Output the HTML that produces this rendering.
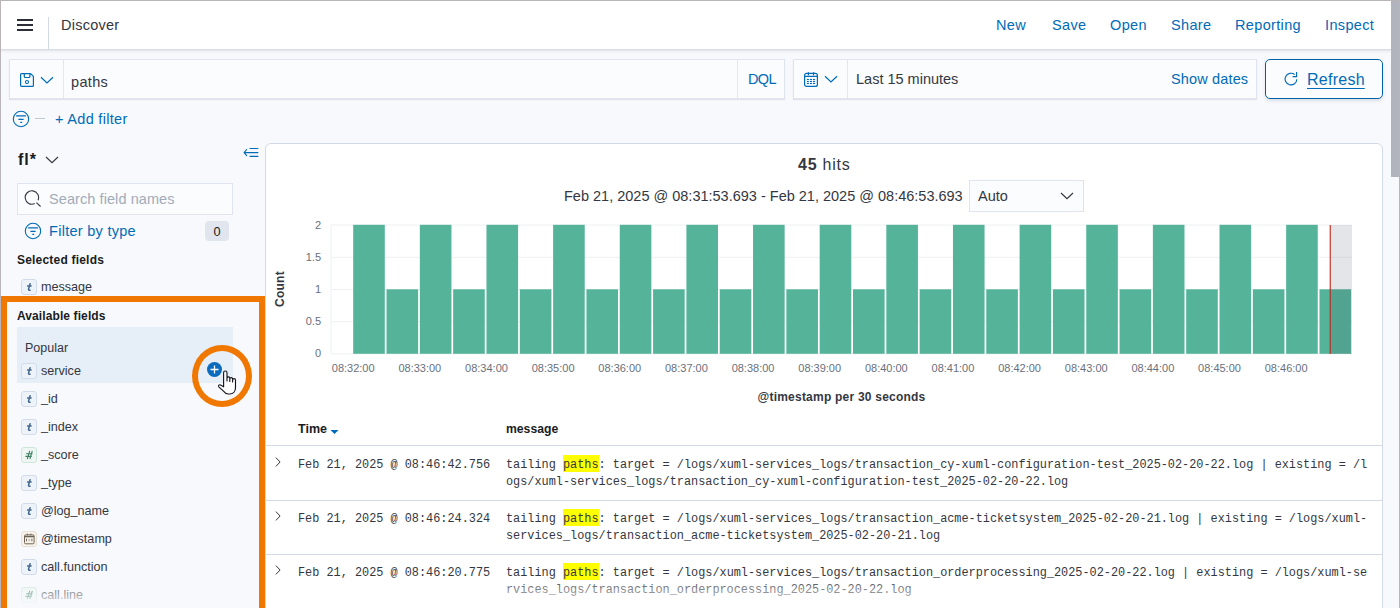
<!DOCTYPE html>
<html><head><meta charset="utf-8">
<style>
*{box-sizing:border-box;margin:0;padding:0}
html,body{width:1400px;height:608px;overflow:hidden}
body{position:relative;background:#F8F9FC;font-family:"Liberation Sans",sans-serif;color:#343741;font-size:14px}
.a{position:absolute;white-space:nowrap;line-height:normal}
.link{color:#006BB8}
.t14{font-size:14.5px;letter-spacing:.25px}
.nav{top:17px;font-size:14.5px;color:#006BB8;letter-spacing:.35px}
.tok{position:absolute;width:16px;height:16px;border:1px solid #d0dcea;border-radius:3px;background:#eef3f9;font:italic bold 11px "Liberation Sans",sans-serif;color:#4d6e93;text-align:center;line-height:14px;z-index:3}
.tnum{background:#eef7f3;border-color:#cde6da;color:#3d7a60;font-size:10px;font-style:italic}
.fld{position:absolute;left:41px;font-size:12.6px;color:#343741;z-index:3;white-space:nowrap}
.mono{font-family:"Liberation Mono",monospace;font-size:11.875px;color:#343741}
.hl{background:#ffff00;padding-top:3px}
.bold12{font-size:12px;font-weight:bold;color:#1a1c21;letter-spacing:.18px}
</style></head>
<body>
<div class="a" style="left:0;top:0;width:1400px;height:608px;border:1px solid #b8b4b8;border-bottom:none;z-index:50"></div>
<div class="a" style="left:1391px;top:1px;width:8px;height:176px;background:#b1b4bd;z-index:49"></div>

<div class="a" style="left:0;top:0;width:1400px;height:49px;background:#fff;box-shadow:0 1px 2px rgba(152,162,179,.35),0 2px 4px rgba(152,162,179,.15);z-index:5">
  <div class="a" style="left:17px;top:19px;width:16px;height:2px;background:#2b2e38"></div>
  <div class="a" style="left:17px;top:24px;width:16px;height:2px;background:#2b2e38"></div>
  <div class="a" style="left:17px;top:29px;width:16px;height:2px;background:#2b2e38"></div>
  <div class="a" style="left:48px;top:17px;width:1px;height:32px;background:#d3dae6"></div>
  <div class="a" style="left:61px;top:17px;font-size:14.5px;color:#343741;letter-spacing:.25px">Discover</div>
  <div class="a nav" style="left:996px">New</div>
  <div class="a nav" style="left:1052px">Save</div>
  <div class="a nav" style="left:1110px">Open</div>
  <div class="a nav" style="left:1171px">Share</div>
  <div class="a nav" style="left:1235px">Reporting</div>
  <div class="a nav" style="left:1325px">Inspect</div>
</div>


<div class="a" style="left:9px;top:59px;width:776px;height:40px;background:#FBFCFD;border:1px solid #dfe4ee;box-shadow:0 1px 1px rgba(152,162,179,.25)"></div>
<div class="a" style="left:63px;top:60px;width:1px;height:38px;background:#e3e8f0"></div>
<svg class="a" style="left:20px;top:73px" width="14" height="14" viewBox="0 0 14 14"><path d="M1.6 0.6H10.6L13.4 3.4V12.4A1 1 0 0 1 12.4 13.4H1.6A1 1 0 0 1 0.6 12.4V1.6A1 1 0 0 1 1.6 0.6Z M4.3 0.6V3.5A1 1 0 0 0 5.3 4.5H8.9A1 1 0 0 0 9.9 3.5V0.6" fill="none" stroke="#006BB8" stroke-width="1.2" stroke-linejoin="round"/><circle cx="7" cy="9" r="1.55" fill="none" stroke="#006BB8" stroke-width="1.05"/></svg>
<svg class="a" style="left:40px;top:76px" width="14" height="8" viewBox="0 0 14 8"><path d="M1 1.3l6 5.6 6-5.6" fill="none" stroke="#006BB8" stroke-width="1.2"/></svg>
<div class="a t14" style="left:71px;top:73.5px;color:#343741;letter-spacing:.35px">paths</div>
<div class="a" style="left:737px;top:60px;width:1px;height:38px;background:#e3e8f0"></div>
<div class="a link" style="left:748px;top:71px;font-size:14.5px;letter-spacing:-.6px">DQL</div>

<div class="a" style="left:793px;top:59px;width:464px;height:40px;background:#FBFCFD;border:1px solid #dfe4ee;box-shadow:0 1px 1px rgba(152,162,179,.25)"></div>
<div class="a" style="left:847px;top:60px;width:1px;height:38px;background:#e3e8f0"></div>
<svg class="a" style="left:804px;top:72px" width="14" height="16" viewBox="0 0 14 16"><rect x="0.6" y="1.4" width="12.8" height="13" rx="2" fill="none" stroke="#006BB8" stroke-width="1.2"/><path d="M0.6 4.3h12.8M4.4 0.2v3M9.5 0.2v3" fill="none" stroke="#006BB8" stroke-width="1.2"/><g fill="#006BB8"><rect x="2.9" y="6.95" width="2" height="1.1"/><rect x="6.0" y="6.95" width="2" height="1.1"/><rect x="9.0" y="6.95" width="2" height="1.1"/><rect x="2.9" y="8.95" width="2" height="1.1"/><rect x="6.0" y="8.95" width="2" height="1.1"/><rect x="9.0" y="8.95" width="2" height="1.1"/><rect x="2.9" y="10.95" width="2" height="1.1"/><rect x="6.0" y="10.95" width="2" height="1.1"/><rect x="9.0" y="10.95" width="2" height="1.1"/></g></svg>
<svg class="a" style="left:824px;top:75.3px" width="14" height="8" viewBox="0 0 14 8"><path d="M1 1.3l6 5.6 6-5.6" fill="none" stroke="#006BB8" stroke-width="1.2"/></svg>
<div class="a" style="left:856px;top:71px;font-size:14.5px;color:#343741">Last 15 minutes</div>
<div class="a link" style="left:1171px;top:71px;font-size:14.5px;letter-spacing:.15px">Show dates</div>

<div class="a" style="left:1265px;top:59px;width:118px;height:40px;background:#FBFCFD;border:1px solid #0061a6;border-radius:5px;box-shadow:0 2px 3px rgba(152,162,179,.3)"></div>
<svg class="a" style="left:1284px;top:71px" width="16" height="16" viewBox="0 0 16 16"><path d="M12.8 8.2A5.85 5.85 0 1 1 10.6 3.5M12.6 1V5.6H8.6" fill="none" stroke="#006BB8" stroke-width="1.15"/></svg>
<div class="a link" style="left:1307px;top:71px;font-size:16px;letter-spacing:.25px;text-decoration:underline;text-underline-offset:2.5px">Refresh</div>

<svg class="a" style="left:12px;top:110px" width="18" height="18" viewBox="0 0 18 18"><circle cx="9" cy="9" r="7.7" fill="none" stroke="#006BB8" stroke-width="1.1"/><path d="M4.1 5.9h9.8M6.4 9.4h5.2M8.3 12.4h1.9" stroke="#006BB8" stroke-width="1.1"/></svg>
<div class="a" style="left:35px;top:118px;width:10px;height:1px;background:#c2c9d6"></div>
<div class="a link" style="left:55px;top:111px;font-size:14.5px;letter-spacing:.3px">+ Add filter</div>


<div class="a" style="left:18px;top:150.5px;font-size:16px;font-weight:bold;color:#1a1c21;letter-spacing:1px">fl*</div>
<svg class="a" style="left:45px;top:155px" width="14" height="9" viewBox="0 0 14 9"><path d="M1 2l6 5.6 6-5.6" fill="none" stroke="#343741" stroke-width="1.2"/></svg>
<svg class="a" style="left:243px;top:146px" width="16" height="12" viewBox="0 0 16 12"><path d="M3.7 3.5L1.1 6.6 3.7 9.7M1.1 6.6h13.8M7 2.5h7.9M7 10.4h7.9" fill="none" stroke="#006BB8" stroke-width="1.1" stroke-linecap="round" stroke-linejoin="round"/></svg>
<div class="a" style="left:17px;top:183px;width:216px;height:32px;background:#FBFCFD;border:1px solid #dfe4ee"></div>
<svg class="a" style="left:24px;top:190px" width="18" height="18" viewBox="0 0 18 18"><path d="M10.73 13.57A6.7 6.7 0 1 1 13.97 10.33M12.4 12.6L16.6 16.5" fill="none" stroke="#343741" stroke-width="1.1"/></svg>
<div class="a" style="left:49px;top:190.5px;font-size:14.5px;letter-spacing:.08px;color:#A2ABBA">Search field names</div>
<svg class="a" style="left:24px;top:222px" width="18" height="18" viewBox="0 0 18 18"><circle cx="9" cy="9" r="7.7" fill="none" stroke="#006BB8" stroke-width="1.1"/><path d="M4.1 5.9h9.8M6.4 9.4h5.2M8.3 12.4h1.9" stroke="#006BB8" stroke-width="1.1"/></svg>
<div class="a link" style="left:49px;top:223px;font-size:14.5px;letter-spacing:.28px">Filter by type</div>
<div class="a" style="left:205px;top:221px;width:24px;height:20px;background:#e0e5ee;border-radius:4px;font-size:12.8px;text-align:center;line-height:22px;color:#1a1c21">0</div>
<div class="a bold12" style="left:17px;top:253px;letter-spacing:.2px">Selected fields</div>
<div class="tok" style="left:21px;top:279px"></div><svg class="a" style="left:21px;top:279px;z-index:4" width="16" height="16" viewBox="0 0 16 16"><path d="M9.1 4.7L7.6 10c-.25 1.05.35 1.4 1.5 1.15M6.6 6.9h3.5" fill="none" stroke="#44698f" stroke-width="1.5" stroke-linecap="round"/></svg>
<div class="fld" style="top:280px">message</div>

<div class="a" style="left:1px;top:296px;width:264px;height:330px;border:6px solid #F07800;z-index:20"></div>
<div class="a bold12" style="left:17px;top:309px;letter-spacing:.1px">Available fields</div>
<div class="a" style="left:17px;top:327px;width:216px;height:56px;background:#E6EEF7"></div>
<div class="a" style="left:25px;top:341px;font-size:12.5px;color:#343741;letter-spacing:0;z-index:3">Popular</div>
<div class="tok" style="left:21px;top:363px"></div><svg class="a" style="left:21px;top:363px;z-index:4" width="16" height="16" viewBox="0 0 16 16"><path d="M9.1 4.7L7.6 10c-.25 1.05.35 1.4 1.5 1.15M6.6 6.9h3.5" fill="none" stroke="#44698f" stroke-width="1.5" stroke-linecap="round"/></svg>
<div class="fld" style="top:364px">service</div>
<div class="a" style="left:207px;top:362px;width:15px;height:15px;border-radius:50%;background:#0b6bbd;z-index:3"></div>
<svg class="a" style="left:207px;top:362px;z-index:4" width="15" height="15" viewBox="0 0 15 15"><path d="M7.5 3.5v8M3.5 7.5h8" stroke="#fff" stroke-width="1.3"/></svg>
<div class="a" style="left:191.5px;top:344.5px;width:60px;height:62px;border-radius:50%;border:6px solid #F07800;z-index:21"></div>
<svg class="a" style="left:217px;top:370px;z-index:22" width="21" height="26" viewBox="0 0 21 26"><path d="M6.6 15V2.7a1.7 1.7 0 0 1 3.4 0V11V8.3a1.4 1.4 0 0 1 2.8 0V11.5V9a1.4 1.4 0 0 1 2.8 0V12V10a1.45 1.45 0 0 1 2.9 0V17.5c0 3.8-2.2 6.5-5.6 6.5h-1.6c-2.3 0-3.6-1.1-4.8-2.8L1.8 16.8c-.8-1.2.5-2.5 1.7-1.8L6.6 16.8Z" fill="#fff" stroke="#15171c" stroke-width="1.15" stroke-linejoin="round"/></svg>

<div class="tok" style="left:21px;top:391px"></div><svg class="a" style="left:21px;top:391px;z-index:4" width="16" height="16" viewBox="0 0 16 16"><path d="M9.1 4.7L7.6 10c-.25 1.05.35 1.4 1.5 1.15M6.6 6.9h3.5" fill="none" stroke="#44698f" stroke-width="1.5" stroke-linecap="round"/></svg>
<div class="fld" style="top:392px"><span style="position:relative;top:-1.5px">_</span>id</div>
<div class="tok" style="left:21px;top:419px"></div><svg class="a" style="left:21px;top:419px;z-index:4" width="16" height="16" viewBox="0 0 16 16"><path d="M9.1 4.7L7.6 10c-.25 1.05.35 1.4 1.5 1.15M6.6 6.9h3.5" fill="none" stroke="#44698f" stroke-width="1.5" stroke-linecap="round"/></svg>
<div class="fld" style="top:420px"><span style="position:relative;top:-1.5px">_</span>index</div>
<div class="tok tnum" style="left:21px;top:447px"></div><svg class="a" style="left:21px;top:447px;z-index:4" width="16" height="16" viewBox="0 0 16 16"><path d="M8.7 3.9L6.3 12M11.3 3.9L8.9 12M5.2 6.7h6.3M4.4 9.4h6.3" fill="none" stroke="#3f7f63" stroke-width="1.1"/></svg>
<div class="fld" style="top:448px"><span style="position:relative;top:-1.5px">_</span>score</div>
<div class="tok" style="left:21px;top:475px"></div><svg class="a" style="left:21px;top:475px;z-index:4" width="16" height="16" viewBox="0 0 16 16"><path d="M9.1 4.7L7.6 10c-.25 1.05.35 1.4 1.5 1.15M6.6 6.9h3.5" fill="none" stroke="#44698f" stroke-width="1.5" stroke-linecap="round"/></svg>
<div class="fld" style="top:476px"><span style="position:relative;top:-1.5px">_</span>type</div>
<div class="tok" style="left:21px;top:503px"></div><svg class="a" style="left:21px;top:503px;z-index:4" width="16" height="16" viewBox="0 0 16 16"><path d="M9.1 4.7L7.6 10c-.25 1.05.35 1.4 1.5 1.15M6.6 6.9h3.5" fill="none" stroke="#44698f" stroke-width="1.5" stroke-linecap="round"/></svg>
<div class="fld" style="top:504px">@log<span style="position:relative;top:-1.5px">_</span>name</div>
<div class="tok" style="left:21px;top:531px;background:#f7f3ec;border-color:#e6dfd2"></div><svg class="a" style="left:21px;top:531px;z-index:4" width="16" height="16" viewBox="0 0 16 16"><g fill="none" stroke="#6d6352" stroke-width="1"><rect x="3.5" y="3.9" width="9.6" height="8.9" rx="1.2"/><path d="M3.5 5.6h9.6" stroke-width="1.4"/><path d="M6.4 2.6v1.6M9.9 2.6v1.6M5.5 7.7v2.6M10.9 7.7v2.6"/><path d="M8.2 7.7v2.6" stroke="#c4bcae" stroke-width="1.4"/></g></svg>
<div class="fld" style="top:532px">@timestamp</div>
<div class="tok" style="left:21px;top:559px"></div><svg class="a" style="left:21px;top:559px;z-index:4" width="16" height="16" viewBox="0 0 16 16"><path d="M9.1 4.7L7.6 10c-.25 1.05.35 1.4 1.5 1.15M6.6 6.9h3.5" fill="none" stroke="#44698f" stroke-width="1.5" stroke-linecap="round"/></svg>
<div class="fld" style="top:560px">call.function</div>
<div class="tok tnum" style="left:21px;top:587px"></div><svg class="a" style="left:21px;top:587px;z-index:4" width="16" height="16" viewBox="0 0 16 16"><path d="M8.7 3.9L6.3 12M11.3 3.9L8.9 12M5.2 6.7h6.3M4.4 9.4h6.3" fill="none" stroke="#3f7f63" stroke-width="1.1"/></svg>
<div class="fld" style="top:588px">call.line</div>
<div class="a" style="left:7px;top:576px;width:252px;height:32px;background:linear-gradient(to bottom,rgba(248,249,252,0),rgba(248,249,252,.95));z-index:5"></div>

<div class="a" style="left:265px;top:143px;width:1118px;height:500px;background:#fff;border:1px solid #d3dae6;border-radius:6px;z-index:1"></div>
<div class="a" style="left:798px;top:156px;font-size:16px;color:#343741;letter-spacing:.75px;z-index:2"><b>45</b> hits</div>
<div class="a" style="left:564px;top:188px;font-size:14.5px;color:#343741;z-index:2">Feb 21, 2025 @ 08:31:53.693 - Feb 21, 2025 @ 08:46:53.693</div>
<div class="a" style="left:969px;top:180px;width:115px;height:32px;background:#FBFCFD;border:1px solid #dfe4ee;z-index:2"></div>
<div class="a" style="left:978px;top:188px;font-size:14.5px;color:#343741;z-index:2">Auto</div>
<svg class="a" style="left:1060px;top:191px;z-index:2" width="14" height="9" viewBox="0 0 14 9"><path d="M1 2l6 5.6 6-5.6" fill="none" stroke="#343741" stroke-width="1.2"/></svg>
<svg class="a" style="left:0;top:0;z-index:2" width="1400" height="608" viewBox="0 0 1400 608">
<g stroke="#eef0f3" stroke-width="1">
<line x1="331" y1="225" x2="1352" y2="225"/><line x1="331" y1="257.3" x2="1352" y2="257.3"/><line x1="331" y1="289.5" x2="1352" y2="289.5"/><line x1="331" y1="321.7" x2="1352" y2="321.7"/><line x1="331" y1="353.8" x2="1352" y2="353.8"/>
<line x1="331" y1="225" x2="331" y2="354"/>
</g>
<rect x="353.20" y="224.80" width="31.6" height="129.00" fill="#54B399"/><rect x="386.52" y="289.30" width="31.6" height="64.50" fill="#54B399"/><rect x="419.84" y="224.80" width="31.6" height="129.00" fill="#54B399"/><rect x="453.16" y="289.30" width="31.6" height="64.50" fill="#54B399"/><rect x="486.48" y="224.80" width="31.6" height="129.00" fill="#54B399"/><rect x="519.80" y="289.30" width="31.6" height="64.50" fill="#54B399"/><rect x="553.12" y="224.80" width="31.6" height="129.00" fill="#54B399"/><rect x="586.44" y="289.30" width="31.6" height="64.50" fill="#54B399"/><rect x="619.76" y="224.80" width="31.6" height="129.00" fill="#54B399"/><rect x="653.08" y="289.30" width="31.6" height="64.50" fill="#54B399"/><rect x="686.40" y="224.80" width="31.6" height="129.00" fill="#54B399"/><rect x="719.72" y="289.30" width="31.6" height="64.50" fill="#54B399"/><rect x="753.04" y="224.80" width="31.6" height="129.00" fill="#54B399"/><rect x="786.36" y="289.30" width="31.6" height="64.50" fill="#54B399"/><rect x="819.68" y="224.80" width="31.6" height="129.00" fill="#54B399"/><rect x="853.00" y="289.30" width="31.6" height="64.50" fill="#54B399"/><rect x="886.32" y="224.80" width="31.6" height="129.00" fill="#54B399"/><rect x="919.64" y="289.30" width="31.6" height="64.50" fill="#54B399"/><rect x="952.96" y="224.80" width="31.6" height="129.00" fill="#54B399"/><rect x="986.28" y="289.30" width="31.6" height="64.50" fill="#54B399"/><rect x="1019.60" y="224.80" width="31.6" height="129.00" fill="#54B399"/><rect x="1052.92" y="289.30" width="31.6" height="64.50" fill="#54B399"/><rect x="1086.24" y="224.80" width="31.6" height="129.00" fill="#54B399"/><rect x="1119.56" y="289.30" width="31.6" height="64.50" fill="#54B399"/><rect x="1152.88" y="224.80" width="31.6" height="129.00" fill="#54B399"/><rect x="1186.20" y="289.30" width="31.6" height="64.50" fill="#54B399"/><rect x="1219.52" y="224.80" width="31.6" height="129.00" fill="#54B399"/><rect x="1252.84" y="289.30" width="31.6" height="64.50" fill="#54B399"/><rect x="1286.16" y="224.80" width="31.6" height="129.00" fill="#54B399"/><rect x="1319.48" y="289.30" width="31.6" height="64.50" fill="#54B399"/>
<rect x="1331" y="225" width="21" height="129" fill="rgba(72,80,104,.15)"/>
<rect x="1329.6" y="225" width="1.4" height="129" fill="#BD271E" opacity=".8"/>
<g font-family="Liberation Sans" font-size="11" fill="#69707D">
<text x="321" y="229" text-anchor="end">2</text>
<text x="321" y="261" text-anchor="end">1.5</text>
<text x="321" y="293" text-anchor="end">1</text>
<text x="321" y="325" text-anchor="end">0.5</text>
<text x="321" y="357" text-anchor="end">0</text>
<text x="353.20" y="372" text-anchor="middle">08:32:00</text><text x="419.84" y="372" text-anchor="middle">08:33:00</text><text x="486.48" y="372" text-anchor="middle">08:34:00</text><text x="553.12" y="372" text-anchor="middle">08:35:00</text><text x="619.76" y="372" text-anchor="middle">08:36:00</text><text x="686.40" y="372" text-anchor="middle">08:37:00</text><text x="753.04" y="372" text-anchor="middle">08:38:00</text><text x="819.68" y="372" text-anchor="middle">08:39:00</text><text x="886.32" y="372" text-anchor="middle">08:40:00</text><text x="952.96" y="372" text-anchor="middle">08:41:00</text><text x="1019.60" y="372" text-anchor="middle">08:42:00</text><text x="1086.24" y="372" text-anchor="middle">08:43:00</text><text x="1152.88" y="372" text-anchor="middle">08:44:00</text><text x="1219.52" y="372" text-anchor="middle">08:45:00</text><text x="1286.16" y="372" text-anchor="middle">08:46:00</text>
</g>
<text x="0" y="0" transform="translate(283.5 289) rotate(-90)" text-anchor="middle" font-family="Liberation Sans" font-size="12" font-weight="bold" letter-spacing=".22" fill="#343741">Count</text>
<text x="841.5" y="401" text-anchor="middle" font-family="Liberation Sans" font-size="12" font-weight="bold" letter-spacing=".22" fill="#343741">@timestamp per 30 seconds</text>
</svg>
<div class="a bold12" style="left:298px;top:421.5px;font-size:12.5px;letter-spacing:0;z-index:2">Time</div>
<svg class="a" style="left:330px;top:429px;z-index:2" width="9" height="6" viewBox="0 0 9 6"><path d="M0.5 1h8L4.5 5z" fill="#006BB8"/></svg>
<div class="a bold12" style="left:506px;top:421.5px;font-size:12.2px;letter-spacing:0;z-index:2">message</div>
<div class="a" style="left:266px;top:445px;width:1116px;height:1px;background:#d3dae6;z-index:2"></div>
<div class="a" style="left:266px;top:500px;width:1116px;height:1px;background:#d3dae6;z-index:2"></div>
<div class="a" style="left:266px;top:554px;width:1116px;height:1px;background:#d3dae6;z-index:2"></div>

<svg class="a" style="left:274px;top:457px;z-index:2" width="8" height="11" viewBox="0 0 8 11"><path d="M1.9 .6l4.2 4.4-4.2 4.4" fill="none" stroke="#343741" stroke-width="1"/></svg>
<div class="a mono" style="left:298px;top:457px;line-height:17px;z-index:2">Feb 21, 2025 @ 08:46:42.756</div>
<div class="a mono" style="left:506px;top:457px;line-height:17px;z-index:2">tailing <span class="hl">paths</span>: target = /logs/xuml-services_logs/transaction_cy-xuml-configuration-test_2025-02-20-22.log | existing = /l<br>ogs/xuml-services_logs/transaction_cy-xuml-configuration-test_2025-02-20-22.log</div>

<svg class="a" style="left:274px;top:511px;z-index:2" width="8" height="11" viewBox="0 0 8 11"><path d="M1.9 .6l4.2 4.4-4.2 4.4" fill="none" stroke="#343741" stroke-width="1"/></svg>
<div class="a mono" style="left:298px;top:511px;line-height:17px;z-index:2">Feb 21, 2025 @ 08:46:24.324</div>
<div class="a mono" style="left:506px;top:511px;line-height:17px;z-index:2">tailing <span class="hl">paths</span>: target = /logs/xuml-services_logs/transaction_acme-ticketsystem_2025-02-20-21.log | existing = /logs/xuml-<br>services_logs/transaction_acme-ticketsystem_2025-02-20-21.log</div>

<svg class="a" style="left:274px;top:565px;z-index:2" width="8" height="11" viewBox="0 0 8 11"><path d="M1.9 .6l4.2 4.4-4.2 4.4" fill="none" stroke="#343741" stroke-width="1"/></svg>
<div class="a mono" style="left:298px;top:565px;line-height:17px;z-index:2">Feb 21, 2025 @ 08:46:20.775</div>
<div class="a mono" style="left:506px;top:565px;line-height:17px;z-index:2">tailing <span class="hl">paths</span>: target = /logs/xuml-services_logs/transaction_orderprocessing_2025-02-20-22.log | existing = /logs/xuml-se<br>rvices_logs/transaction_orderprocessing_2025-02-20-22.log</div>

<div class="a" style="left:266px;top:578px;width:1116px;height:30px;background:linear-gradient(to bottom,rgba(255,255,255,0) 0,rgba(255,255,255,.42) 12px,rgba(255,255,255,.75) 30px);z-index:3"></div>
</body></html>
